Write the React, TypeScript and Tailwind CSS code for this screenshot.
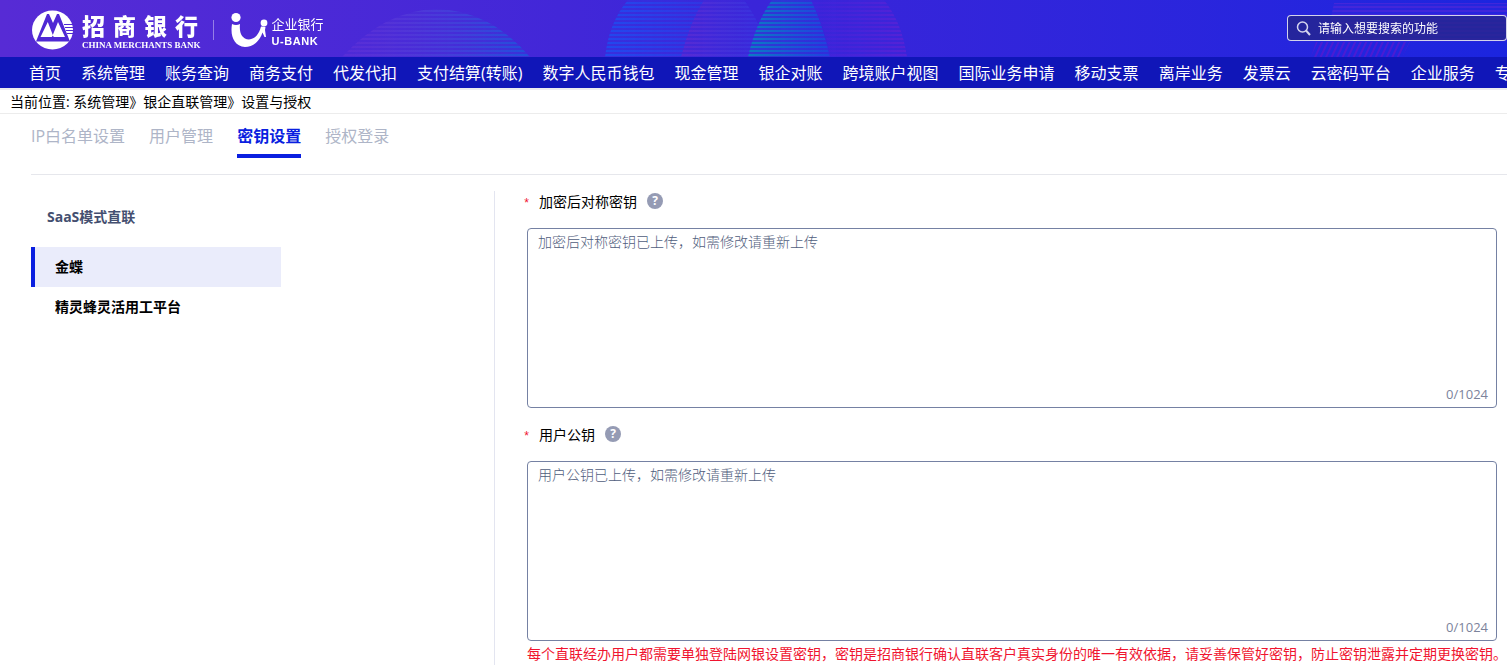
import { useState } from "react";

const navItems = [
  "首页",
  "系统管理",
  "账务查询",
  "商务支付",
  "代发代扣",
  "支付结算(转账)",
  "数字人民币钱包",
  "现金管理",
  "银企对账",
  "跨境账户视图",
  "国际业务申请",
  "移动支票",
  "离岸业务",
  "发票云",
  "云密码平台",
  "企业服务",
  "专",
];

const tabs = ["IP白名单设置", "用户管理", "密钥设置", "授权登录"];

const platforms = ["金蝶", "精灵蜂灵活用工平台"];

const MAX_LENGTH = 1024;

function BannerArt() {
  return (
    <svg className="absolute inset-0 h-full w-full" aria-hidden="true">
      <defs>
        <pattern id="lines" width="8" height="4" patternUnits="userSpaceOnUse">
          <rect width="8" height="2" y="2" fill="#fff" />
          <rect width="8" height="2" fill="#444" />
        </pattern>
        <pattern id="diag" width="5" height="5" patternUnits="userSpaceOnUse" patternTransform="rotate(25)">
          <rect width="2" height="5" fill="#7a12c8" />
        </pattern>
        <mask id="stripes">
          <rect width="100%" height="57" fill="url(#lines)" />
        </mask>
        <linearGradient id="g1">
          <stop offset="0" stopColor="#7a3ad8" stopOpacity="0.3" />
          <stop offset="1" stopColor="#1c55dc" stopOpacity="0.9" />
        </linearGradient>
        <linearGradient id="g2">
          <stop offset="0" stopColor="#1f4cf0" stopOpacity="0.9" />
          <stop offset="1" stopColor="#2f3ae6" stopOpacity="0.4" />
        </linearGradient>
        <linearGradient id="g3">
          <stop offset="0" stopColor="#7420c8" stopOpacity="0.6" />
          <stop offset="1" stopColor="#3a3ade" stopOpacity="0.4" />
        </linearGradient>
        <linearGradient id="g4">
          <stop offset="0" stopColor="#0b7cc4" />
          <stop offset="1" stopColor="#1c48e0" stopOpacity="0.8" />
        </linearGradient>
        <linearGradient id="g5">
          <stop offset="0" stopColor="#4f24dc" stopOpacity="0.3" />
          <stop offset="1" stopColor="#6322d4" stopOpacity="0.7" />
        </linearGradient>
      </defs>
      <g mask="url(#stripes)">
        <path d="M342 57Q385 10 436 9Q490 10 530 57Z" fill="url(#g1)" />
        <path d="M605 57Q609 22 628 0H744Q764 27 768 57Z" fill="url(#g2)" />
        <path d="M681 57Q690 22 704 0H744Q764 28 768 57Z" fill="url(#g3)" />
        <path d="M748 57Q756 22 772 0H811Q822 22 830 57Z" fill="url(#g4)" />
        <path d="M811 0H884Q902 22 907 57H830Q826 28 811 0Z" fill="url(#g5)" />
        <path d="M1334 3H1507V42H1326Z" fill="#6a2ad8" opacity="0.45" />
      </g>
      <path d="M1316 42H1410L1402 57H1311Z" fill="url(#diag)" opacity="0.45" />
    </svg>
  );
}

function BankLogo() {
  return (
    <svg className="h-10 w-[42px]" viewBox="0 0 42 40" aria-hidden="true">
      <ellipse cx="20.500" cy="20" rx="20.500" ry="19.500" fill="#fff" />
      <path d="M4 31.500L15 4H17L21 13L25 4H27L38 31.500Z" fill="#4f28d4" />
      <path d="M8.500 27L15.800 12L20.800 25L26 12L33 27H21.800L20.800 25.500L19.800 27Z" fill="#fff" />
      <path d="M32 14.500H42M33 17.500H42M34 20.500H42M35 23.500H42" stroke="#4f28d4" strokeWidth="1.200" />
    </svg>
  );
}

function UBankLogo() {
  return (
    <svg className="h-9 w-[37px]" viewBox="0 0 37 36" fill="#fff" aria-hidden="true">
      <circle cx="5" cy="5.500" r="4.600" />
      <circle cx="33" cy="11" r="3.400" />
      <path d="M1 12Q5 14 9 12C8 21 11 27 18 27.500C24 27 28 22 30 14.500L34.500 15L34 18L35 25H33.500L31.500 20.500C29 29 22 35 14 35C3 34-1 24 1 12Z" />
    </svg>
  );
}

function Header() {
  return (
    <header className="relative flex h-[57px] items-center justify-between overflow-hidden bg-linear-to-r from-[#572bd5] via-[#3a25d9] to-[#1b25df] pl-8 text-white">
      <BannerArt />
      <a href="#" className="relative flex items-center pt-0.5">
        <BankLogo />
        <span className="ml-2 flex flex-col pt-0.5">
          <span className="flex gap-2 font-['Noto_Sans_CJK_SC',sans-serif] text-[23px] leading-7 font-black">
            <span>招</span>
            <span>商</span>
            <span>银</span>
            <span>行</span>
          </span>
          <span className="font-['Liberation_Serif',serif] text-[9px] leading-3 font-bold">
            CHINA MERCHANTS BANK
          </span>
        </span>
        <span className="mr-[17px] ml-3 h-5 w-px bg-white/40" />
        <UBankLogo />
        <span className="ml-1 flex flex-col pt-0.5">
          <span className="text-[13px] leading-5">企业银行</span>
          <span className="font-['Liberation_Sans',sans-serif] text-[11px] leading-[14px] font-bold tracking-wider">U-BANK</span>
        </span>
      </a>
      <label className="relative mb-px flex h-[26px] w-[220px] items-center gap-1.5 rounded border border-white/80 bg-[#25258c]/80 pl-2">
        <svg className="h-4 w-4 shrink-0" viewBox="0 0 16 16" fill="none" stroke="#d5d5ee" aria-hidden="true">
          <circle cx="6.500" cy="7" r="5" strokeWidth="1.500" />
          <path d="M10 10.500L14 15" strokeWidth="2" />
        </svg>
        <input
          type="search"
          aria-label="搜索功能"
          placeholder="请输入想要搜索的功能"
          className="min-w-0 flex-1 bg-transparent pt-0.5 text-xs text-white outline-none placeholder:text-white"
        />
      </label>
    </header>
  );
}

function NavBar() {
  return (
    <nav className="flex h-[31px] items-center gap-5 overflow-hidden bg-[#1016b8] pl-[29px] text-base whitespace-nowrap text-white">
      {navItems.map((item) => (
        <a key={item} href="#" className="shrink-0">
          {item}
        </a>
      ))}
    </nav>
  );
}

function HelpButton({ label }: { label: string }) {
  return (
    <button
      type="button"
      aria-label={label}
      className="ml-[10px] flex h-4 w-4 items-center justify-center rounded-full bg-[#959bb4] text-xs font-bold text-white"
    >
      ?
    </button>
  );
}

type KeyFieldProps = {
  id: string;
  label: string;
  placeholder: string;
};

function KeyField({ id, label, placeholder }: KeyFieldProps) {
  const [value, setValue] = useState("");

  return (
    <div className="pb-4">
      <div className="flex h-5 items-center">
        <span className="-ml-1 w-4 pt-1.5 font-['Liberation_Mono',monospace] text-xs text-[#f0142f]">*</span>
        <label htmlFor={id} className="pt-0.5">
          {label}
        </label>
        <HelpButton label={label + "说明"} />
      </div>
      <div className="relative mt-[17px]">
        <textarea
          id={id}
          value={value}
          maxLength={MAX_LENGTH}
          placeholder={placeholder}
          onChange={(e) => setValue(e.target.value)}
          className="block h-[180px] w-full resize-none rounded border border-[#7581a3] px-[10px] py-[3px] leading-5 font-light outline-none placeholder:text-[#4f5d7c]"
        />
        <span className="absolute right-[9px] bottom-[5px] font-['Open_Sans',sans-serif] text-[13px] leading-[18px] text-[#7c839b]">
          {value.length}/{MAX_LENGTH}
        </span>
      </div>
    </div>
  );
}

export default function App() {
  const [activeTab, setActiveTab] = useState("密钥设置");
  const [platform, setPlatform] = useState("金蝶");

  return (
    <div className="flex min-h-screen flex-col overflow-x-hidden bg-white font-['Open_Sans','Noto_Sans_CJK_SC',sans-serif] text-sm text-black">
      <Header />
      <NavBar />
      <div className="flex h-[26px] shrink-0 items-center border-t-2 border-b border-t-[#ececf0] border-b-[#ececec] pl-[10px]">
        当前位置: 系统管理》银企直联管理》设置与授权
      </div>

      <div className="ml-[31px] flex h-[61px] shrink-0 items-start gap-6 border-b border-[#e6e7ec] text-base">
        {tabs.map((tab) => (
          <button
            key={tab}
            type="button"
            onClick={() => setActiveTab(tab)}
            className={
              tab === activeTab
                ? "h-11 border-b-4 border-[#0a1fe0] pt-1 font-bold text-[#0a1fe0]"
                : "h-11 border-b-4 border-transparent pt-1 text-[#aeb5c7]"
            }
          >
            {tab}
          </button>
        ))}
      </div>

      <main className="flex flex-1 pt-4">
        <aside className="w-[495px] shrink-0 border-r border-[#e3e5f0] pl-[31px]">
          <h2 className="flex h-14 items-center pb-1 pl-4 font-bold text-[#444f70]">SaaS模式直联</h2>
          <ul className="w-[250px]">
            {platforms.map((item) => (
              <li key={item}>
                <button
                  type="button"
                  onClick={() => setPlatform(item)}
                  className={
                    item === platform
                      ? "h-10 w-full border-l-4 border-[#0a1fe0] bg-[#eaecfb] pl-5 text-left font-bold"
                      : "h-10 w-full border-l-4 border-transparent pl-5 text-left font-bold"
                  }
                >
                  {item}
                </button>
              </li>
            ))}
          </ul>
        </aside>
        <section className="min-w-0 flex-1 pr-[10px] pl-8">
          <KeyField id="symmetric-key" label="加密后对称密钥" placeholder="加密后对称密钥已上传，如需修改请重新上传" />
          <KeyField id="public-key" label="用户公钥" placeholder="用户公钥已上传，如需修改请重新上传" />
          <p className="-mt-3 leading-[18px] whitespace-nowrap text-[#f0142f]">
            每个直联经办用户都需要单独登陆网银设置密钥，密钥是招商银行确认直联客户真实身份的唯一有效依据，请妥善保管好密钥，防止密钥泄露并定期更换密钥。
          </p>
        </section>
      </main>
    </div>
  );
}
